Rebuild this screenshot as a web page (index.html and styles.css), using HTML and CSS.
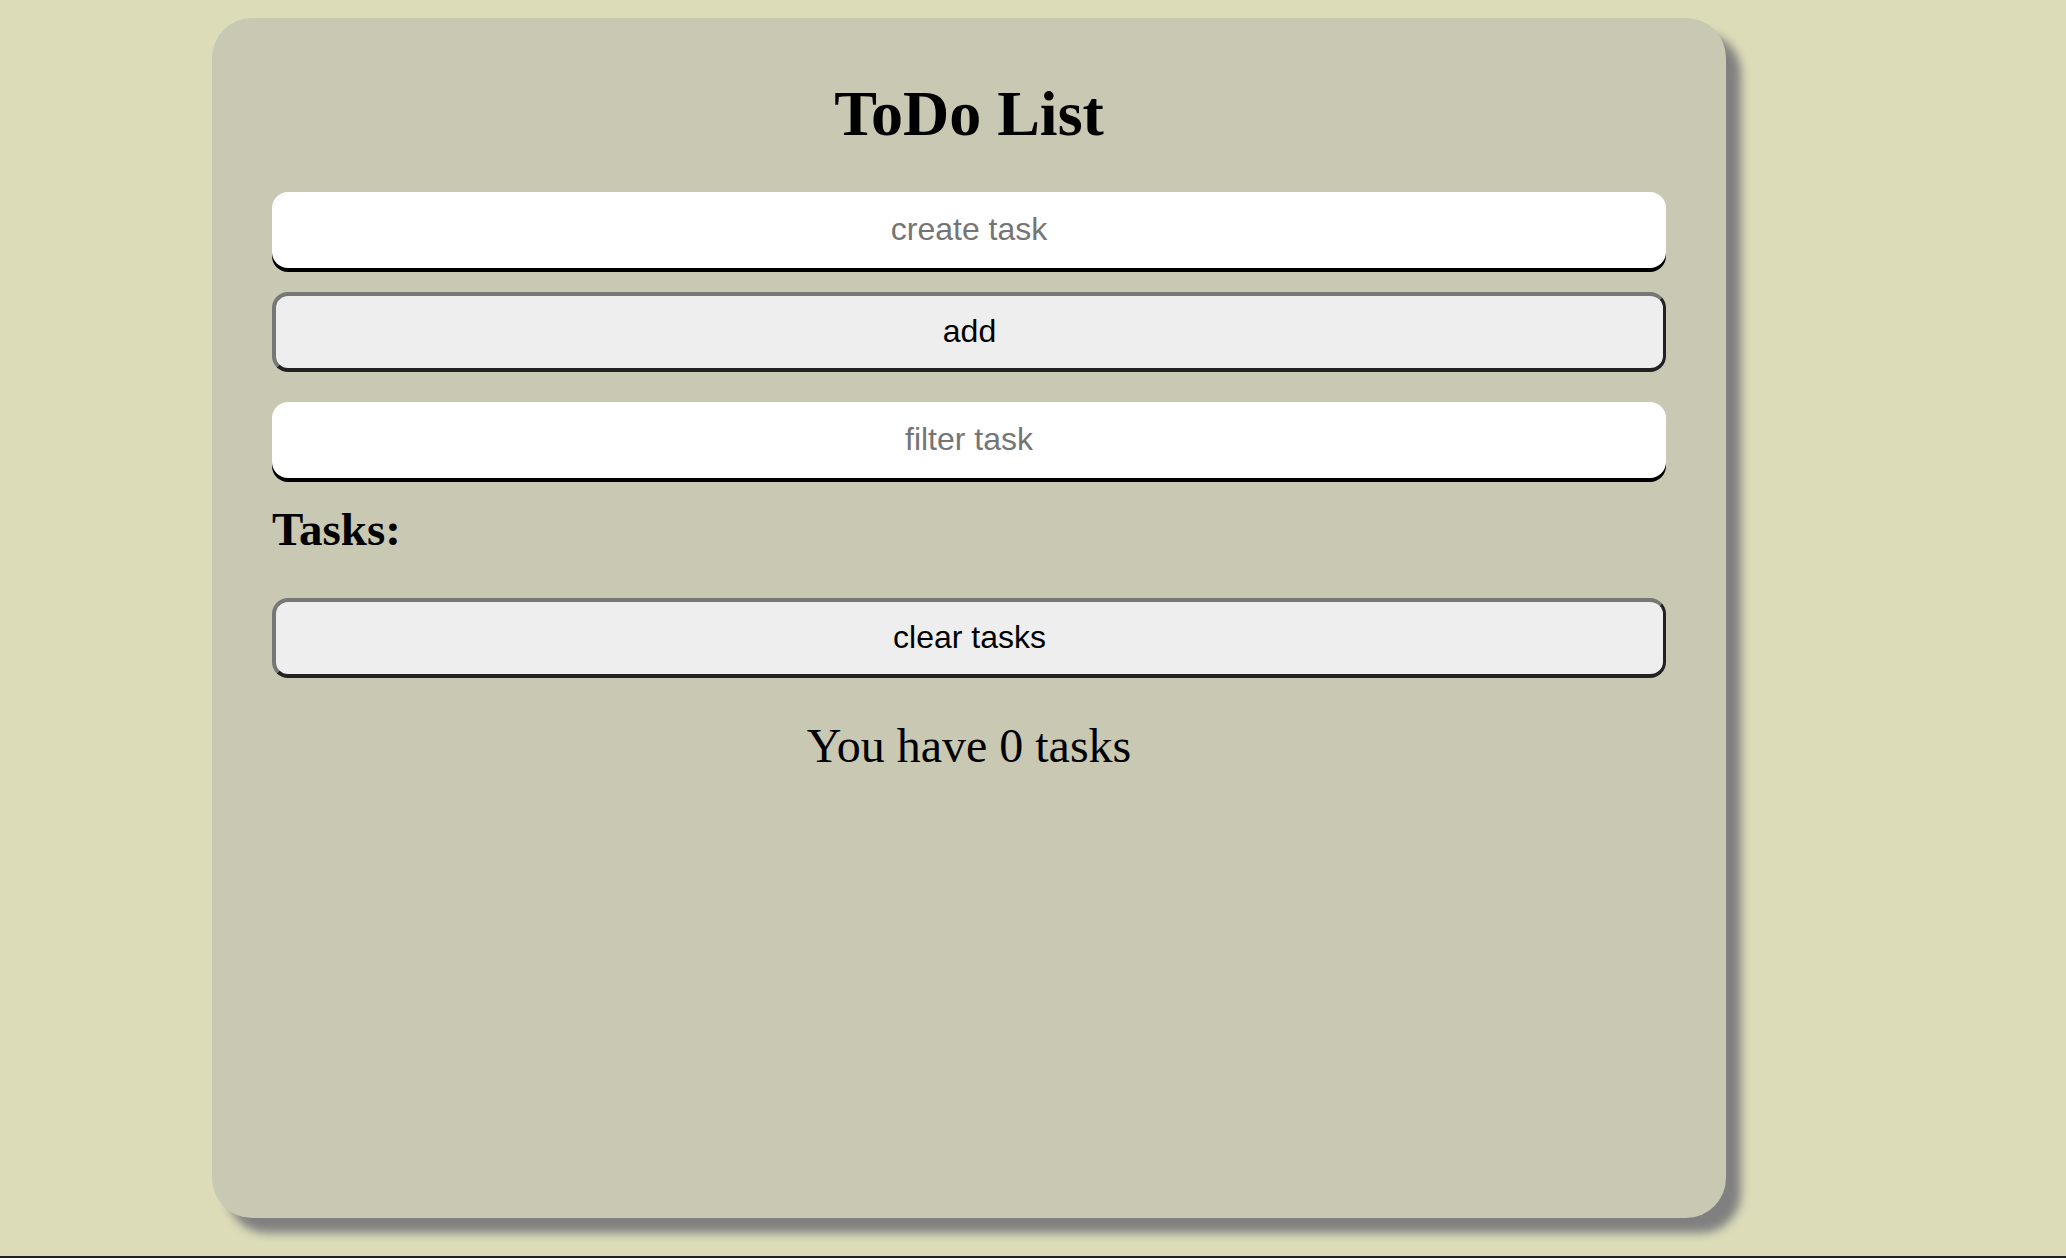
FILE: index.html
```html
<!DOCTYPE html>
<html lang="en">
<head>
<meta charset="utf-8">
<title>ToDo List</title>
<link rel="stylesheet" href="styles.css">
</head>
<body>
  <main class="card">
    <h1 class="title">ToDo List</h1>
    <input class="field field-create" type="text" placeholder="create task">
    <button class="btn btn-add" type="button">add</button>
    <input class="field field-filter" type="text" placeholder="filter task">
    <h2 class="subtitle">Tasks:</h2>
    <ul class="task-list"></ul>
    <button class="btn btn-clear" type="button">clear tasks</button>
    <p class="count">You have 0 tasks</p>
  </main>
  <div class="bottom-bar"></div>
</body>
</html>
```

FILE: styles.css
```css
html, body {
  margin: 0;
  padding: 0;
}

body {
  background: #dcdcb9;
  font-family: "Liberation Serif", "Times New Roman", serif;
  color: #000;
  height: 1258px;
  overflow: hidden;
}

.card {
  box-sizing: border-box;
  width: 1514px;
  height: 1200px;
  margin: 18px 0 0 212px;
  padding: 59px 60px 0 60px;
  background: #c9c8b3;
  border-radius: 40px;
  box-shadow: 15px 15px 10px #808080;
  display: flex;
  flex-direction: column;
}

.title {
  margin: 0 0 41px 0;
  font-size: 64px;
  line-height: 74px;
  font-weight: bold;
  text-align: center;
}

.field {
  box-sizing: border-box;
  width: 100%;
  height: 76px;
  border: none;
  border-radius: 16px;
  background: #fff;
  box-shadow: 0 4px 0 #000;
  font-family: "Liberation Sans", Arial, sans-serif;
  font-size: 32px;
  text-align: center;
  color: #000;
  outline: none;
  padding: 0 16px 2px 16px;
}

.field::placeholder {
  color: #757575;
}

.field-create {
  margin-bottom: 24px;
}

.btn {
  box-sizing: border-box;
  width: 100%;
  height: 80px;
  border-style: solid;
  border-width: 4px 3px 4px 4px;
  border-color: #777 #222 #222 #777;
  border-radius: 16px;
  background: #eeeeee;
  font-family: "Liberation Sans", Arial, sans-serif;
  font-size: 32px;
  color: #000;
  padding: 0 0 2px 0;
}

.btn-add {
  margin-bottom: 30px;
}

.subtitle {
  margin: 24px 0 0 0;
  font-size: 47px;
  line-height: 55px;
  font-weight: bold;
}

.task-list {
  margin: 0;
  padding: 0;
  list-style: none;
  height: 41px;
}

.count {
  margin: 40px 0 0 0;
  font-size: 48px;
  line-height: 55px;
  text-align: center;
}

.bottom-bar {
  margin-top: 38px;
  height: 2px;
  background: #222;
}
```
